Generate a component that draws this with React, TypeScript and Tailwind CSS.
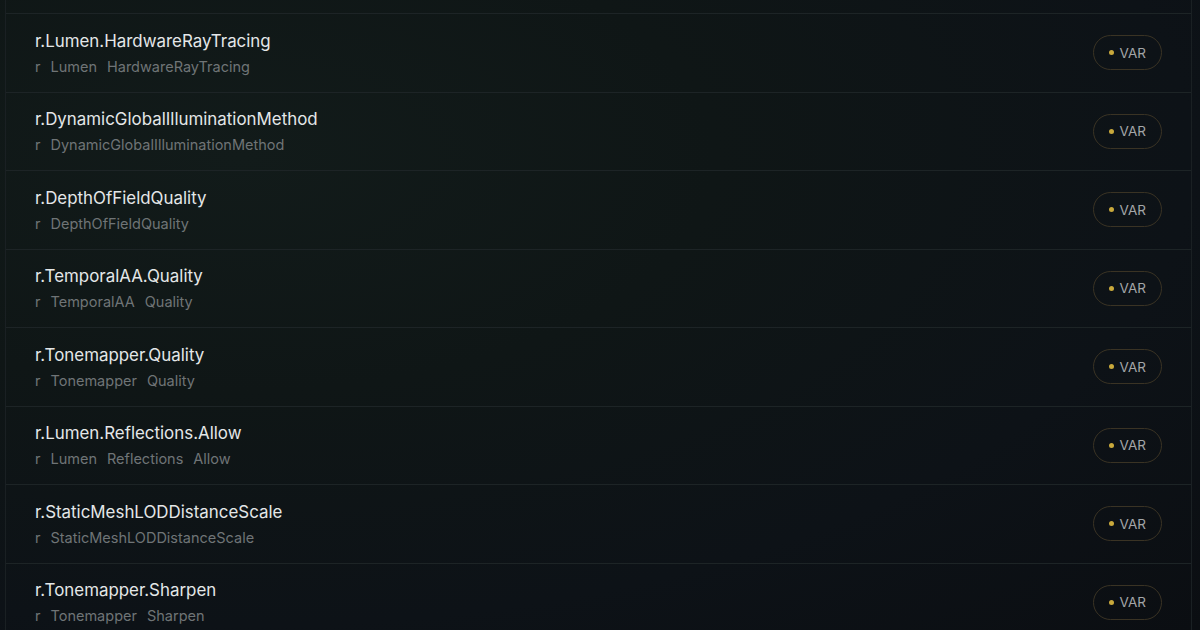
const rows = [
  "r.Lumen.HardwareRayTracing",
  "r.DynamicGlobalIlluminationMethod",
  "r.DepthOfFieldQuality",
  "r.TemporalAA.Quality",
  "r.Tonemapper.Quality",
  "r.Lumen.Reflections.Allow",
  "r.StaticMeshLODDistanceScale",
  "r.Tonemapper.Sharpen",
];

function VarBadge() {
  return (
    <div className="flex items-center gap-[6px] h-[35px] px-[15px] rounded-full border border-[#3a3324] text-[13.5px] text-[#a3a6a8]">
      <span className="w-[5px] h-[5px] rounded-full bg-[#c9a93c]" />
      VAR
    </div>
  );
}

function CvarRow({ name }: { name: string }) {
  const parts = name.split(".");
  return (
    <div className="flex items-center justify-between h-[78.5px] border-t border-[#1d2426] pl-[29px] pr-[29px]">
      <div className="flex flex-col gap-[4px]">
        <div className="text-[16.9px] leading-6 text-[#e4e7e8]">{name}</div>
        <div className="flex gap-[10px] text-[14.5px] leading-5 text-[#6f7476]">
          {parts.map((p, i) => (
            <span key={i}>{p}</span>
          ))}
        </div>
      </div>
      <VarBadge />
    </div>
  );
}

export default function App() {
  return (
    <div
      className="w-[1200px] h-[630px] overflow-hidden bg-[radial-gradient(ellipse_at_20%_25%,#121b1a_0%,#0f1616_35%,#0d1217_70%,#0b0e12_100%)]"
      style={{ fontFamily: "Inter, 'Noto Sans', sans-serif" }}
    >
      <div className="ml-[5px] mr-[8px] h-full border-x border-[#1a2023]">
        <div className="h-[13px]" />
        {rows.map((r) => (
          <CvarRow key={r} name={r} />
        ))}
      </div>
    </div>
  );
}
